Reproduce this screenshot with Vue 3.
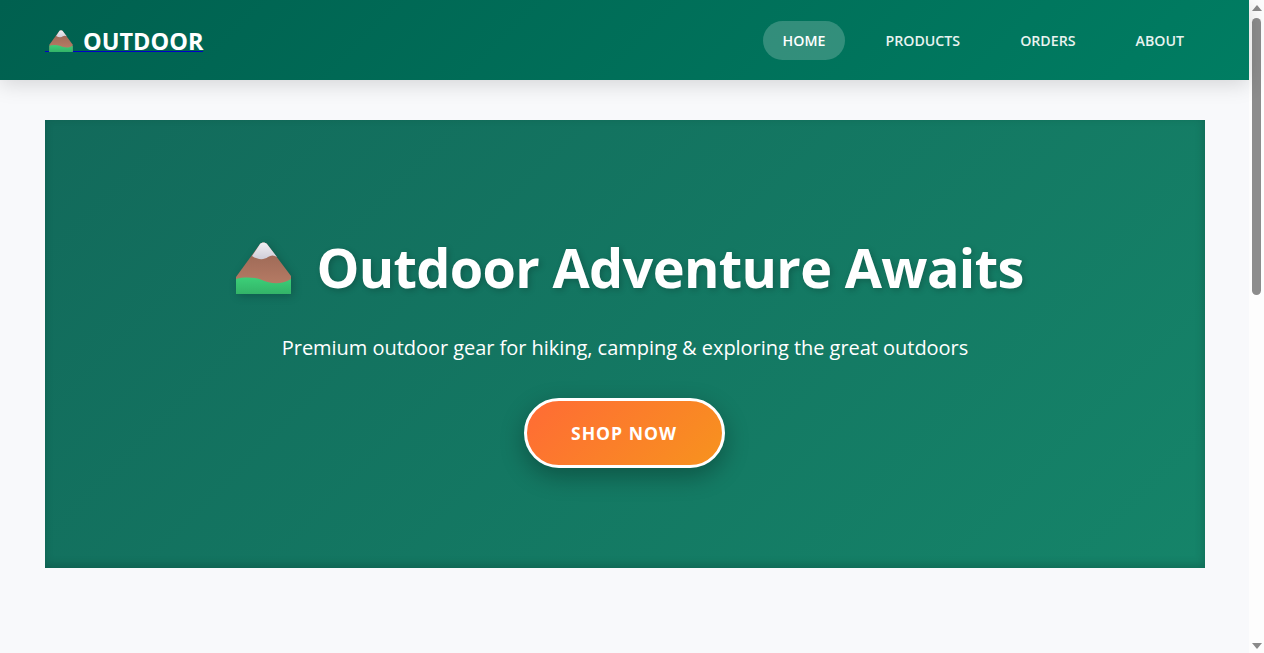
<script setup>
const links = ['HOME', 'PRODUCTS', 'ORDERS', 'ABOUT']
</script>

<template>
  <div class="shell">
    <div class="page">
      <svg width="0" height="0" class="defs">
        <defs>
          <linearGradient id="rock" x1="0" y1="0" x2="0" y2="1">
            <stop offset="0" stop-color="#966453" />
            <stop offset="1" stop-color="#bd8068" />
          </linearGradient>
          <linearGradient id="grass" x1="0" y1="0" x2="0" y2="1">
            <stop offset="0" stop-color="#3ccf78" />
            <stop offset="1" stop-color="#33b368" />
          </linearGradient>
          <linearGradient id="snow" x1="0" y1="0" x2="0" y2="1">
            <stop offset="0" stop-color="#f1f0f4" />
            <stop offset="1" stop-color="#cfcdd8" />
          </linearGradient>
          <g id="mountain">
            <path d="M24 2 C26 0 29 0 31 2 L55 34 V52 H0 V35 Z" fill="url(#rock)" />
            <path d="M24 2 C26 0 29 0 31 2 L41 15 C38 13 35 13 32 15 C28 18 22 18 16 14 Z" fill="url(#snow)" />
            <path d="M0 37 C8 35 18 35 26 38 C33 41 44 44 55 37 V52 H0 Z" fill="url(#grass)" />
          </g>
        </defs>
      </svg>
      <header class="nav">
        <a class="brand">
          <svg class="mtn small" viewBox="0 0 55 52"><use href="#mountain" /></svg>
          <span>OUTDOOR</span>
        </a>
        <nav class="links">
          <a v-for="(l, i) in links" :key="l" :class="{ active: i === 0 }">{{ l }}</a>
        </nav>
      </header>
      <main class="main">
        <section class="hero">
          <h1>
            <svg class="mtn big" viewBox="0 0 55 52"><use href="#mountain" /></svg>
            <span class="title">Outdoor Adventure Awaits</span>
          </h1>
          <p>Premium outdoor gear for hiking, camping &amp; exploring the great outdoors</p>
          <button class="cta">SHOP NOW</button>
        </section>
      </main>
    </div>
    <aside class="scrollbar">
      <span class="arrow up"></span>
      <span class="thumb"></span>
      <span class="arrow down"></span>
    </aside>
  </div>
</template>

<style>
html, body { margin: 0; background: #f8f9fb; }
</style>

<style scoped>
.shell {
  display: flex;
  height: 653px;
  overflow: hidden;
}
.page {
  flex: 1;
  min-width: 0;
  font-family: "Open Sans", "Noto Sans", sans-serif;
  background: #f8f9fb;
}
.defs { position: absolute; }
.scrollbar {
  flex: 0 0 15px;
  display: flex;
  flex-direction: column;
  align-items: center;
  background: #fdfdfd;
  padding: 5px 0 4px;
  box-sizing: border-box;
}
.arrow {
  width: 0;
  height: 0;
  border-left: 5px solid transparent;
  border-right: 5px solid transparent;
}
.arrow.up { border-bottom: 6px solid #8a8a8a; }
.arrow.down { border-top: 6px solid #8a8a8a; margin-top: auto; }
.thumb {
  width: 9px;
  height: 277px;
  margin-top: 7px;
  border-radius: 5px;
  background: #8c8c8c;
}
.nav {
  height: 80px;
  box-sizing: border-box;
  padding: 0 45px;
  display: flex;
  align-items: center;
  justify-content: space-between;
  background: linear-gradient(135deg, #00604f, #007d62);
  box-shadow: 0 4px 20px rgba(0, 0, 0, 0.15);
  position: relative;
}
.brand {
  position: relative;
  display: flex;
  align-items: center;
  gap: 10px;
  color: #fff;
  font-size: 23.5px;
  font-weight: 700;
  line-height: 32px;
  padding: 2px 0 0 4px;
}
.brand::after {
  content: "";
  position: absolute;
  left: 0;
  right: 0;
  bottom: 5px;
  height: 1px;
  background: #0000c8;
}
.mtn.small {
  position: relative;
  z-index: 1;
  width: 24px;
  height: 22px;
}
.links { display: flex; gap: 20px; }
.links a {
  color: #e8f3f0;
  font-size: 14.2px;
  font-weight: 600;
  line-height: 19px;
  padding: 10px 20px;
  border-radius: 20px;
}
.links a.active { background: rgba(255, 255, 255, 0.2); color: #fff; }
.main { padding: 40px 44px 0 45px; }
.hero {
  height: 448px;
  box-sizing: border-box;
  padding-top: 109px;
  display: flex;
  flex-direction: column;
  align-items: center;
  background: linear-gradient(135deg, #126a5b, #158469);
  color: #fff;
  box-shadow: inset -1px -3px 8px rgba(0, 40, 30, 0.25);
}
h1 {
  margin: 0 0 0 10px;
  display: flex;
  align-items: center;
  gap: 25px;
  font-size: 54px;
  font-weight: 700;
  letter-spacing: -0.67px;
  line-height: 76px;
  text-shadow: 2px 2px 6px rgba(0, 0, 0, 0.2);
}
.title { margin-bottom: 2px; }
.mtn.big {
  width: 55px;
  height: 52px;
  filter: drop-shadow(2px 2px 4px rgba(0, 0, 0, 0.2));
}
p {
  margin: 27px 0 36px;
  font-size: 20px;
  letter-spacing: -0.04px;
  line-height: 28px;
}
.cta {
  width: 201px;
  height: 70px;
  margin-left: -2px;
  box-sizing: border-box;
  border: 3px solid #fff;
  border-radius: 35px;
  color: #fff;
  font-family: inherit;
  font-size: 17.6px;
  font-weight: 700;
  letter-spacing: 1px;
  background: linear-gradient(135deg, #ff6b35, #f7931e);
  box-shadow: 0 8px 25px rgba(0, 0, 0, 0.3);
}
</style>
